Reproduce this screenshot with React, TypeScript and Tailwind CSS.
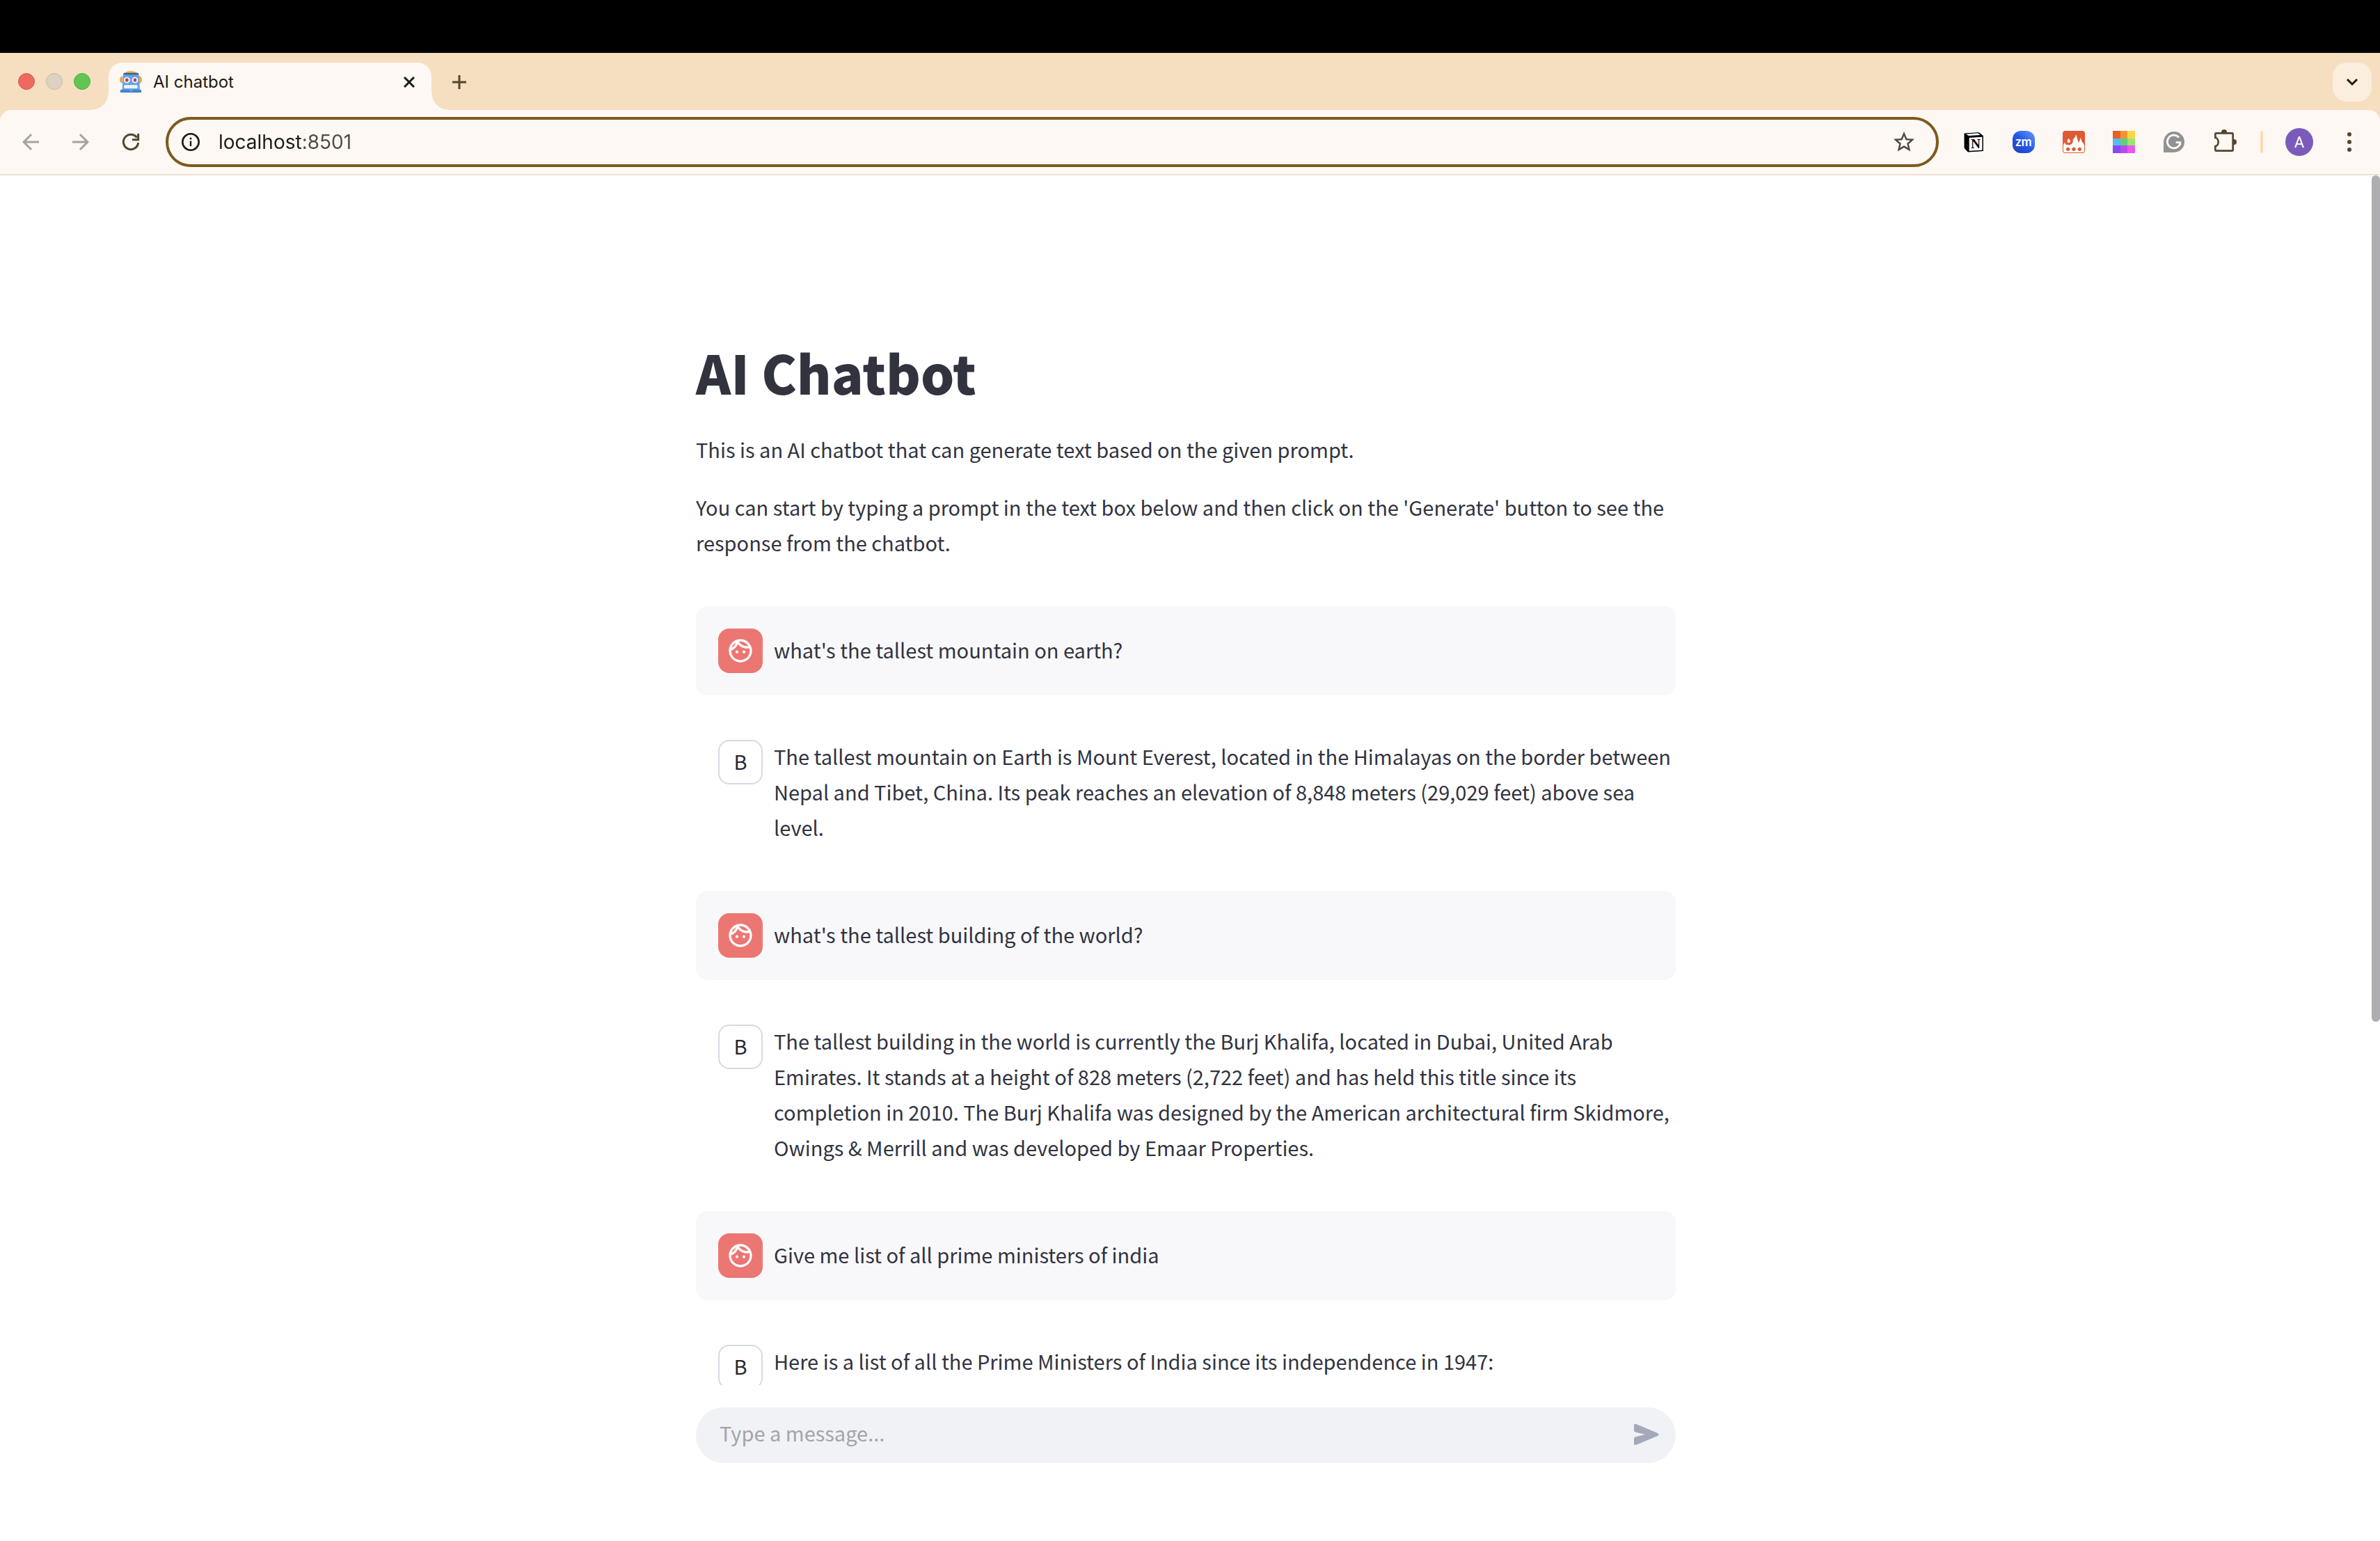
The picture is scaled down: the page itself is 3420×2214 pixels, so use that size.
import type { ReactNode } from "react";
import { MdArrowBack, MdArrowForward, MdOutlineFace, MdStarBorder } from "react-icons/md";

type Message = { role: "user" | "bot"; text: string };

const messages: Message[] = [
  { role: "user", text: "what's the tallest mountain on earth?" },
  {
    role: "bot",
    text: "The tallest mountain on Earth is Mount Everest, located in the Himalayas on the border between Nepal and Tibet, China. Its peak reaches an elevation of 8,848 meters (29,029 feet) above sea level.",
  },
  { role: "user", text: "what's the tallest building of the world?" },
  {
    role: "bot",
    text: "The tallest building in the world is currently the Burj Khalifa, located in Dubai, United Arab Emirates. It stands at a height of 828 meters (2,722 feet) and has held this title since its completion in 2010. The Burj Khalifa was designed by the American architectural firm Skidmore, Owings & Merrill and was developed by Emaar Properties.",
  },
  { role: "user", text: "Give me list of all prime ministers of india" },
  {
    role: "bot",
    text: "Here is a list of all the Prime Ministers of India since its independence in 1947:",
  },
];

function RobotIcon() {
  return (
    <svg className="size-8" viewBox="0 0 96 96" aria-hidden="true">
      <path d="M22 10Q28 0 47 0T76 10Z" fill="#f2b13c" />
      <path d="M12 22Q0 26 0 38T12 54ZM84 22Q96 26 96 38T84 54Z" fill="#f0a73a" />
      <path d="M14 20Q16 10 26 10H72Q82 10 84 20L87 82H11Z" fill="#62a6ea" />
      <rect x="16" y="8" width="65" height="8" rx="3" fill="#37618f" />
      <circle cx="31" cy="39" r="13" fill="#fff" />
      <circle cx="66" cy="39" r="13" fill="#fff" />
      <ellipse cx="31" cy="39" rx="7" ry="8" fill="#d03a45" />
      <ellipse cx="66" cy="39" rx="7" ry="8" fill="#d03a45" />
      <rect x="19" y="61" width="58" height="14" rx="4" fill="#fff" />
      <path d="M31 62V75M42 62V75M54 62V75M65 62V75" stroke="#b9cbe0" strokeWidth="2" />
      <path d="M6 80H90Q93 80 93 84V93H3V84Q3 80 6 80Z" fill="#4583c4" />
      <path d="M37 80H61L49 90Z" fill="#62a6ea" />
    </svg>
  );
}

function ReloadIcon() {
  return (
    <svg className="size-9" viewBox="510 330 108 108" fill="none" aria-hidden="true">
      <path d="M596 387A32 32 0 1 1 590 365" stroke="#54452d" strokeWidth="9" />
      <path d="M596 348V374H570" stroke="#54452d" strokeWidth="9" />
    </svg>
  );
}

function InfoIcon() {
  return (
    <svg className="size-8" viewBox="0 0 32 32" fill="none" aria-hidden="true">
      <circle cx="16" cy="16" r="11.7" stroke="#1f1a14" strokeWidth="2.6" />
      <path d="M16 14.5V22" stroke="#1f1a14" strokeWidth="2.4" />
      <circle cx="16" cy="11" r="1.5" fill="#1f1a14" />
    </svg>
  );
}

function NotionIcon() {
  return (
    <svg className="size-8" viewBox="0 0 96 96" aria-hidden="true">
      <path
        d="M6 10Q6 6 10 6L66 2Q70 2 73 4L88 15Q91 17 91 21V82Q91 86 87 86L28 90Q23 90 20 87L9 74Q6 71 6 67Z"
        transform="translate(0 3)"
        fill="#000"
        stroke="#fff"
        strokeWidth="3"
      />
      <path d="M15 14L66 10L77 18L27 21Z" fill="#fff" />
      <path d="M29 30L84 26Q85 26 85 28V81Q85 83 83 83L31 86Q29 86 29 84Z" fill="#fff" />
      <text x="57" y="75" textAnchor="middle" fontFamily="Liberation Serif, serif" fontWeight="700" fontSize="58" fill="#000">
        N
      </text>
    </svg>
  );
}

function FireIcon() {
  return (
    <svg className="size-8" viewBox="0 0 96 96" aria-hidden="true">
      <rect width="96" height="96" rx="12" fill="#e05a34" />
      <path
        d="M3 64Q3 54 10 50Q10 60 22 61Q38 62 43 50Q46 44 44 38Q54 30 58 16Q61 24 63 34Q66 46 70 50Q74 44 76 30Q82 38 82 46Q90 52 93 64V84Q93 93 84 93H12Q3 93 3 84Z"
        fill="#fff"
      />
      <path d="M24 32Q34 40 33 46Q31 52 26 52Q19 51 20 44Q21 38 24 32Z" fill="#fff" />
      <circle cx="23" cy="79" r="8" fill="#e05a34" />
      <circle cx="48" cy="79" r="8" fill="#e05a34" />
      <circle cx="73" cy="79" r="8" fill="#e05a34" />
    </svg>
  );
}

function GrammarlyIcon() {
  return (
    <svg className="size-8" viewBox="0 0 96 96" fill="none" aria-hidden="true">
      <path d="M3 93V48A45 45 0 1 1 48 93Z" fill="#929292" />
      <path d="M69 29A28 28 0 1 0 75 50H56" stroke="#fff" strokeWidth="8" />
      <path d="M75 50V62" stroke="#fff" strokeWidth="6" />
    </svg>
  );
}

function PuzzleIcon() {
  return (
    <svg className="size-9" viewBox="-6 330 108 108" fill="none" aria-hidden="true">
      <path
        d="M14 346H82Q86 346 86 350V418Q86 422 82 422H14Q10 422 10 418V402A13 18 0 0 0 10 366V350Q10 346 14 346Z"
        stroke="#54452d"
        strokeWidth="8"
      />
      <path d="M36 344V342A12 12 0 0 1 60 342V344ZM88 372H90A12 12 0 0 1 90 396H88Z" fill="#54452d" />
    </svg>
  );
}

function ToolButton({ label, children }: { label: string; children: ReactNode }) {
  return (
    <button type="button" aria-label={label} className="flex h-full w-[72px] shrink-0 items-center justify-center">
      {children}
    </button>
  );
}

function TabStrip() {
  return (
    <div className="flex h-[82px] items-end bg-[#f5dfc0]">
      <div className="flex h-[82px] w-[156px] shrink-0 items-center gap-4 pl-[26px]">
        <button type="button" aria-label="Close window" className="size-6 rounded-full border border-[#d9594d] bg-[#ed6a5e]" />
        <button type="button" aria-label="Minimize window" className="size-6 rounded-full border border-[#c5baa9] bg-[#ddd2c2]" />
        <button type="button" aria-label="Zoom window" className="size-6 rounded-full border border-[#50ad3f] bg-[#61c554]" />
      </div>
      <div className="relative flex h-[68px] w-[464px] shrink-0 items-center rounded-t-[20px] bg-[#fdf8f4] pb-3 pl-4 pr-5 before:absolute before:bottom-0 before:-left-6 before:size-6 before:bg-[radial-gradient(circle_at_0_0,transparent_23px,#fdf8f4_24px)] after:absolute after:bottom-0 after:-right-6 after:size-6 after:bg-[radial-gradient(circle_at_100%_0,transparent_23px,#fdf8f4_24px)]">
        <RobotIcon />
        <span className="ml-4 flex-1 text-2xl text-[#1f1a14]">AI chatbot</span>
        <button type="button" aria-label="Close tab" className="flex size-6 items-center justify-center">
          <svg className="size-4" viewBox="0 0 16 16" fill="none" aria-hidden="true">
            <path d="M1 1L15 15M15 1L1 15" stroke="#1f1a14" strokeWidth="3" />
          </svg>
        </button>
      </div>
      <button type="button" aria-label="New tab" className="mb-3 ml-3 flex size-14 items-center justify-center">
        <svg className="size-5" viewBox="0 0 20 20" fill="none" aria-hidden="true">
          <path d="M10 0V20M0 10H20" stroke="#54452d" strokeWidth="3" />
        </svg>
      </button>
      <button
        type="button"
        aria-label="Search tabs"
        className="mb-3 ml-auto mr-3 flex size-14 items-center justify-center rounded-[20px] bg-[#fceedc]"
      >
        <svg className="h-3 w-5" viewBox="0 0 20 12" fill="none" aria-hidden="true">
          <path d="M3 2L10 9L17 2" stroke="#1f1a14" strokeWidth="3" />
        </svg>
      </button>
    </div>
  );
}

function Toolbar() {
  return (
    <div className="bg-[#f5dfc0]">
      <div className="flex h-[94px] items-center rounded-t-2xl border-b-2 border-[#ebe1cf] bg-[#fdf8f4] px-2">
        <ToolButton label="Back">
          <MdArrowBack className="size-9 text-[#a8a29c]" />
        </ToolButton>
        <ToolButton label="Forward">
          <MdArrowForward className="size-9 text-[#a8a29c]" />
        </ToolButton>
        <ToolButton label="Reload">
          <ReloadIcon />
        </ToolButton>
        <div className="mx-[14px] flex h-[72px] min-w-0 flex-1 items-center rounded-full border-4 border-[#7d5a1b] pl-4 pr-7">
          <InfoIcon />
          <input
            aria-label="Address"
            defaultValue="localhost:8501"
            className="ml-6 min-w-0 flex-1 bg-[linear-gradient(90deg,#1f1a14_122px,#514a42_122px)] bg-clip-text text-[28px] text-transparent outline-none"
          />
          <button type="button" aria-label="Bookmark this page">
            <MdStarBorder className="size-9 text-[#4d463d]" />
          </button>
        </div>
        <ToolButton label="Notion">
          <NotionIcon />
        </ToolButton>
        <ToolButton label="Zoom">
          <span className="flex size-8 items-center justify-center rounded-xl bg-linear-to-tr from-[#1c41b5] via-[#2458ea] to-[#6b98f0] pb-0.5 font-['Lato',sans-serif] text-[18px] font-bold text-white">
            zm
          </span>
        </ToolButton>
        <ToolButton label="Campfire">
          <FireIcon />
        </ToolButton>
        <ToolButton label="Color picker">
          <span className="grid size-8 grid-cols-3 grid-rows-3">
            <span className="bg-[#eb5f28]" />
            <span className="bg-[#f19436]" />
            <span className="bg-[#f8d648]" />
            <span className="bg-[#58b9f8]" />
            <span className="bg-[#5fd077]" />
            <span className="bg-[#9be567]" />
            <span className="bg-[#8549f5]" />
            <span className="bg-[#b94bee]" />
            <span className="bg-[#ea57f2]" />
          </span>
        </ToolButton>
        <ToolButton label="Grammarly">
          <GrammarlyIcon />
        </ToolButton>
        <ToolButton label="Extensions">
          <PuzzleIcon />
        </ToolButton>
        <span className="mx-4 h-8 w-1 shrink-0 rounded-full bg-[#fbdcae]" />
        <ToolButton label="Profile">
          <span className="flex size-10 items-center justify-center rounded-full bg-[#7b5bb9] font-['Roboto',sans-serif] text-[22px] text-white">
            A
          </span>
        </ToolButton>
        <ToolButton label="Menu">
          <span className="flex flex-col gap-[5px]">
            <span className="size-1.5 rounded-full bg-[#54452d]" />
            <span className="size-1.5 rounded-full bg-[#54452d]" />
            <span className="size-1.5 rounded-full bg-[#54452d]" />
          </span>
        </ToolButton>
      </div>
    </div>
  );
}

function ChatMessage({ role, text }: Message) {
  if (role === "user") {
    return (
      <article className="flex items-center gap-4 rounded-2xl bg-[#f8f8fb] py-8 pl-8">
        <span className="flex size-16 shrink-0 items-center justify-center rounded-2xl bg-[#ec7672]">
          <MdOutlineFace className="size-10 text-white" />
        </span>
        <p className="pb-1">{text}</p>
      </article>
    );
  }
  return (
    <article className="flex items-start gap-4 py-8 pl-8">
      <span className="flex size-16 shrink-0 items-center justify-center rounded-2xl border-2 border-[#d5dae5] pb-1 text-[#262730]">
        B
      </span>
      <p className="-mt-0.5 mb-0.5">{text}</p>
    </article>
  );
}

export default function App() {
  return (
    <div className="flex h-screen flex-col bg-white font-['Inter',sans-serif]">
      <div className="h-[76px] shrink-0 bg-black" />
      <header className="shrink-0">
        <TabStrip />
        <Toolbar />
      </header>
      <div className="flex min-h-0 flex-1 font-['Noto_Sans_CJK_SC',sans-serif] text-[29px] leading-[51px] text-[#31333f]">
        <div className="flex min-w-0 flex-1 flex-col">
          <main className="min-h-0 flex-1 overflow-hidden">
            <div className="mx-auto max-w-[1408px] pt-[229px]">
              <h1 className="text-[76px] leading-[106px] font-black">AI Chatbot</h1>
              <p className="mt-[33px]">This is an AI chatbot that can generate text based on the given prompt.</p>
              <p className="mt-8">
                You can start by typing a prompt in the text box below and then click on the 'Generate' button to see
                the response from the chatbot.
              </p>
              <section className="mt-[66px] flex flex-col gap-8">
                {messages.map((m) => (
                  <ChatMessage key={m.text} role={m.role} text={m.text} />
                ))}
              </section>
            </div>
          </main>
          <footer className="shrink-0 pt-8 pb-28">
            <form className="mx-auto flex h-20 max-w-[1408px] items-center rounded-full bg-[#f0f2f6] pr-[22px] pl-[34px]">
              <input
                aria-label="Message"
                placeholder="Type a message..."
                className="min-w-0 flex-1 pb-2 outline-none placeholder:text-[#a3a4ab]"
              />
              <button type="button" aria-label="Send" className="flex size-10 items-center justify-center pb-0.5">
                <svg className="h-[30px] w-9" viewBox="0 0 36 30" aria-hidden="true">
                  <path
                    d="M0 2Q0-1 3 0L34 13Q37 15 34 17L3 30Q0 31 0 28V21Q0 19 2 18.500L16 15L2 11.500Q0 11 0 9Z"
                    fill="#a4a8b8"
                  />
                </svg>
              </button>
            </form>
          </footer>
        </div>
        <div className="w-3 shrink-0">
          <div className="h-[62%] rounded-full bg-[#aeadb2]" />
        </div>
      </div>
    </div>
  );
}
